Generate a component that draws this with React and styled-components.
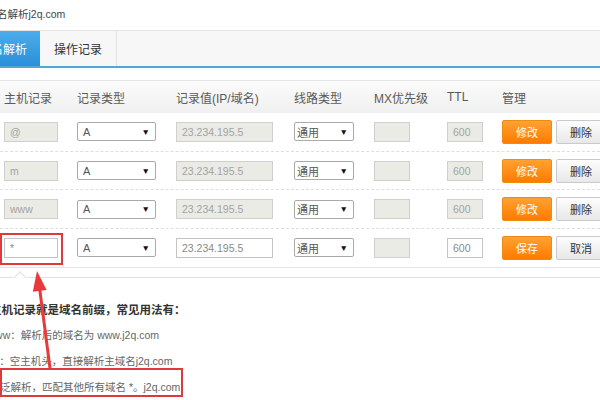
import React from 'react';
import styled, { createGlobalStyle } from 'styled-components';

const Global = createGlobalStyle`
  html, body { margin: 0; padding: 0; background: #fff; }
  body { font-family: "Liberation Sans", "Noto Sans CJK SC", sans-serif; }
`;

const Screen = styled.div`
  position: relative;
  width: 600px;
  height: 400px;
  overflow: hidden;
  background: #fff;
`;

const Page = styled.div`
  width: 660px;
  margin-left: -35px;
`;

const Title = styled.div`
  height: 30px;
  line-height: 28px;
  padding-left: 21.5px;
  font-size: 10.5px;
  color: #444;
  white-space: nowrap;
`;

const TabBar = styled.div`
  display: flex;
  height: 38px;
  box-sizing: border-box;
  background: #f7f7f7;
  border-top: 1px solid #e4e4e4;
  border-bottom: 2px solid #4fa9d3;
`;

const Tab = styled.div`
  height: 35px;
  display: flex;
  align-items: center;
  padding: 0 ${(p) => (p.$active ? '13px' : '14px')} 0 14px;
  font-size: 12px;
  white-space: nowrap;
  color: ${(p) => (p.$active ? '#fff' : '#333')};
  background: ${(p) => (p.$active ? 'linear-gradient(#4badec, #2a8fd9)' : 'transparent')};
  border-right: ${(p) => (p.$active ? 'none' : '1px solid #e2e2e2')};
`;

const Table = styled.div`
  margin-top: 12px;
`;

const cols = '73px 99px 118px 80px 73px 55px 1fr';

const HeaderRow = styled.div`
  display: grid;
  grid-template-columns: ${cols};
  align-items: center;
  height: 33px;
  box-sizing: border-box;
  padding-left: 39px;
  background: linear-gradient(#fbfbfb, #f0f0f0);
  border-top: 1px solid #e6e6e6;
  font-size: 12px;
  color: #5a5a5a;
  white-space: nowrap;
`;

const Row = styled.div`
  display: grid;
  grid-template-columns: ${cols};
  align-items: center;
  height: 38.7px;
  box-sizing: border-box;
  padding-left: 39px;
  border-bottom: 1px ${(p) => (p.$last ? 'solid #e4e4e4' : 'dashed #dedede')};
`;

const Field = styled.div`
  width: ${(p) => p.$w}px;
  height: 20px;
  box-sizing: border-box;
  border: 1px solid ${(p) => (p.$off ? '#cfcfcf' : '#c4c4c4')};
  background: ${(p) => (p.$off ? '#ebebe6' : '#fff')};
  color: ${(p) => (p.$off ? '#a3a3a3' : '#8a8a8a')};
  font-size: 10.5px;
  line-height: 18px;
  padding: 0 5px;
  white-space: nowrap;
`;

const Select = styled.div`
  width: ${(p) => p.$w}px;
  height: 19px;
  box-sizing: border-box;
  border: 1px solid #a9a9a9;
  border-radius: 2px;
  background: #fff;
  display: flex;
  align-items: center;
  justify-content: space-between;
  padding: 0 5px 0 ${(p) => p.$pad}px;
  font-size: 11px;
  color: #555;
`;

const Caret = styled.span`
  font-size: 8.5px;
  color: #111;
`;

const Actions = styled.div`
  display: flex;
  gap: 4px;
`;

const Button = styled.div`
  width: 50px;
  height: 24px;
  box-sizing: border-box;
  border-radius: 2px;
  display: flex;
  align-items: center;
  justify-content: center;
  font-size: 11px;
  flex: none;
  color: ${(p) => (p.$primary ? '#fff' : '#333')};
  background: ${(p) =>
    p.$primary ? 'linear-gradient(#ffa232, #ff7b00)' : 'linear-gradient(#fdfdfd, #e8e8e8)'};
  border: 1px solid ${(p) => (p.$primary ? '#f08a10' : '#cacaca')};
`;

const Tips = styled.div`
  position: relative;
  margin-top: 9px;
  border-top: 1px solid #e2e2e2;
  padding-top: 22px;
  white-space: nowrap;
  &::before {
    content: '';
    position: absolute;
    left: 51px;
    top: -5px;
    width: 7px;
    height: 7px;
    background: #fff;
    border-left: 1px solid #e2e2e2;
    border-top: 1px solid #e2e2e2;
    transform: rotate(45deg);
  }
`;

const Heading = styled.div`
  margin-left: 25px;
  font-size: 11.5px;
  font-weight: bold;
  line-height: 20px;
  color: #333;
  margin-bottom: 2px;
`;

const Item = styled.div`
  margin-left: ${(p) => 35 + p.$shift}px;
  font-size: 10.5px;
  line-height: 26px;
  color: #666;
`;

const Annotations = styled.svg`
  position: absolute;
  left: 0;
  top: 0;
  width: 600px;
  height: 400px;
  pointer-events: none;
`;

const records = [
  { host: '@', saved: true },
  { host: 'm', saved: true },
  { host: 'www', saved: true },
  { host: '*', saved: false },
];

export default function App() {
  return (
    <>
      <Global />
      <Screen>
        <Page>
          <Title>域名解析j2q.com</Title>
          <TabBar>
            <Tab $active>域名解析</Tab>
            <Tab>操作记录</Tab>
          </TabBar>
          <Table>
            <HeaderRow>
              <div>主机记录</div>
              <div>记录类型</div>
              <div>记录值(IP/域名)</div>
              <div>线路类型</div>
              <div>MX优先级</div>
              <div>TTL</div>
              <div>管理</div>
            </HeaderRow>
            {records.map((r, i) => (
              <Row key={i} $last={i === records.length - 1}>
                <Field $w={54} $off={r.saved}>{r.host}</Field>
                <Select $w={79} $pad={5}>
                  <span>A</span>
                  <Caret>▼</Caret>
                </Select>
                <Field $w={97} $off={r.saved}>23.234.195.5</Field>
                <Select $w={60} $pad={2}>
                  <span>通用</span>
                  <Caret>▼</Caret>
                </Select>
                <Field $w={36} $off />
                <Field $w={36} $off={r.saved}>600</Field>
                <Actions>
                  <Button $primary>{r.saved ? '修改' : '保存'}</Button>
                  <Button>{r.saved ? '删除' : '取消'}</Button>
                </Actions>
              </Row>
            ))}
          </Table>
          <Tips>
            <Heading>主机记录就是域名前缀，常见用法有：</Heading>
            <Item $shift={-12.5}>www：解析后的域名为 www.j2q.com</Item>
            <Item $shift={-11.5}>@：空主机头，直接解析主域名j2q.com</Item>
            <Item $shift={-14.6}>*：泛解析，匹配其他所有域名 *。j2q.com</Item>
          </Tips>
        </Page>
        <Annotations viewBox="0 0 600 400">
          <rect x="1" y="234" width="61" height="30" fill="none" stroke="#e0393c" strokeWidth="2" />
          <rect x="1" y="369" width="181" height="27" fill="none" stroke="#e0393c" strokeWidth="2" />
          <line x1="50" y1="368" x2="39.7" y2="289" stroke="#e8393c" strokeWidth="3" />
          <polygon points="37,271 32.8,291.7 46.6,289.9" fill="#e8393c" />
        </Annotations>
      </Screen>
    </>
  );
}
